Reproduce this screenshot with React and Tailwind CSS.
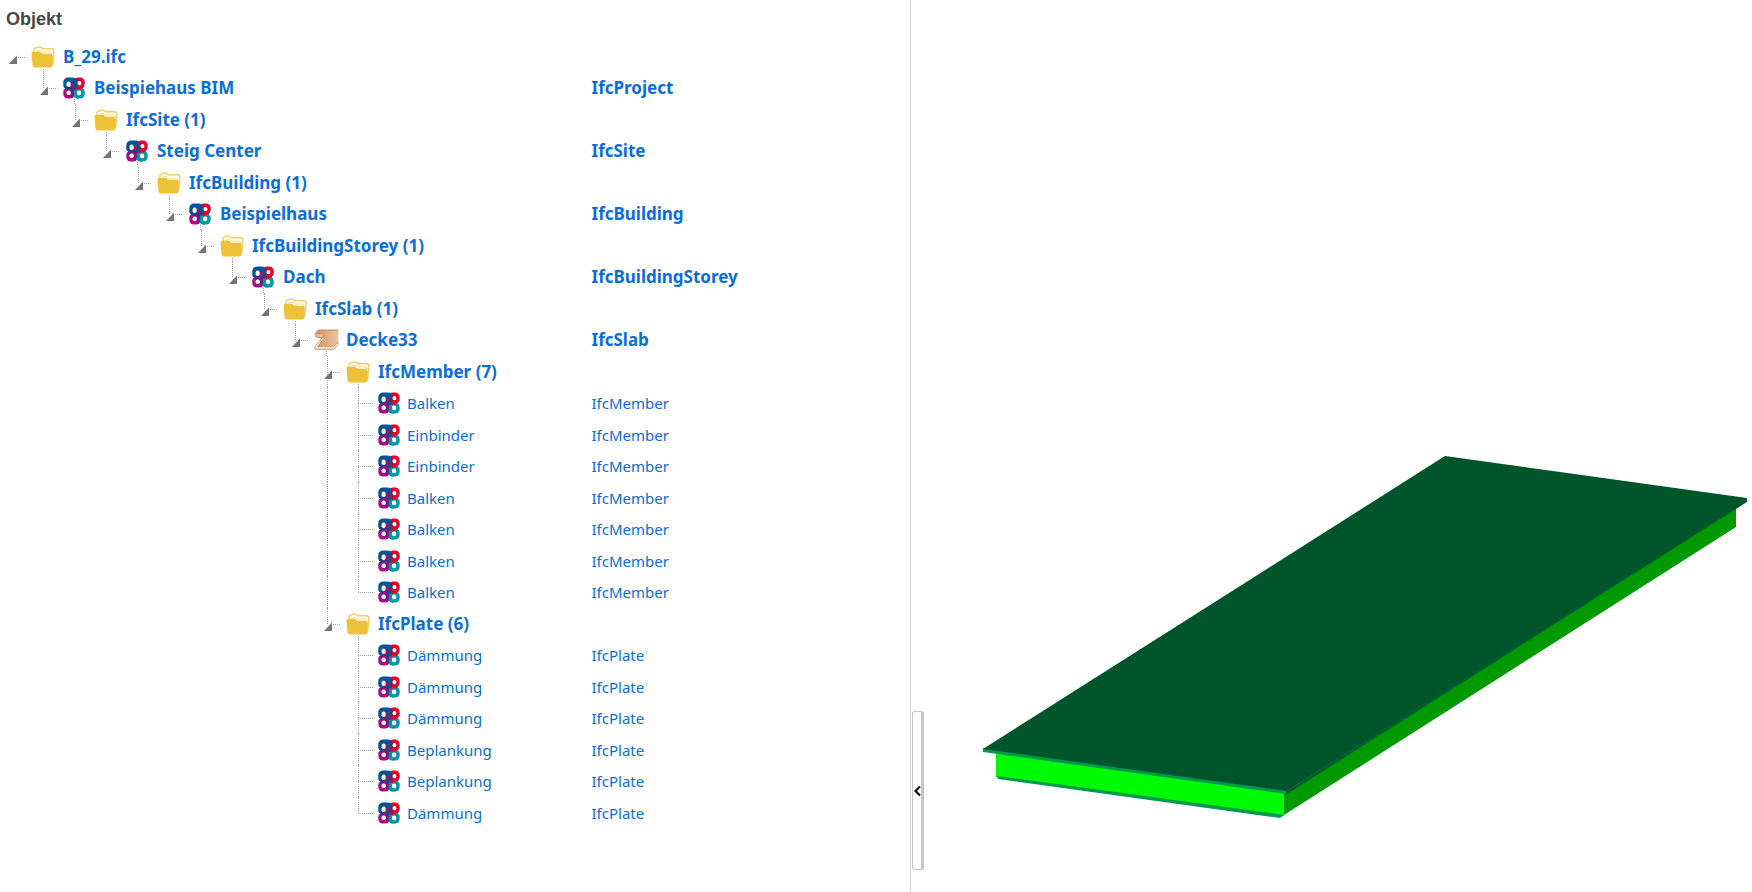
import { useState } from "react";

const ROWS = [
  { depth: 0, icon: "folder", name: "B_29.ifc" },
  { depth: 1, icon: "ifc", name: "Beispiehaus BIM", type: "IfcProject" },
  { depth: 2, icon: "folder", name: "IfcSite (1)" },
  { depth: 3, icon: "ifc", name: "Steig Center", type: "IfcSite" },
  { depth: 4, icon: "folder", name: "IfcBuilding (1)" },
  { depth: 5, icon: "ifc", name: "Beispielhaus", type: "IfcBuilding" },
  { depth: 6, icon: "folder", name: "IfcBuildingStorey (1)" },
  { depth: 7, icon: "ifc", name: "Dach", type: "IfcBuildingStorey" },
  { depth: 8, icon: "folder", name: "IfcSlab (1)" },
  { depth: 9, icon: "beam", name: "Decke33", type: "IfcSlab" },
  { depth: 10, icon: "folder", name: "IfcMember (7)" },
  ...["Balken", "Einbinder", "Einbinder", "Balken", "Balken", "Balken", "Balken"].map((name) => ({
    depth: 11, icon: "ifc", name, type: "IfcMember", leaf: true,
  })),
  { depth: 10, icon: "folder", name: "IfcPlate (6)" },
  ...["Dämmung", "Dämmung", "Dämmung", "Beplankung", "Beplankung", "Dämmung"].map((name) => ({
    depth: 11, icon: "ifc", name, type: "IfcPlate", leaf: true,
  })),
];

// True when a later row continues the branch at the given depth.
function branchContinues(index, depth) {
  for (let i = index + 1; i < ROWS.length; i++) {
    if (ROWS[i].depth < depth) return false;
    if (ROWS[i].depth === depth) return true;
  }
  return false;
}

function FolderIcon() {
  return (
    <svg viewBox="0 0 24 22" className="h-[22px] w-6" aria-hidden="true">
      <path d="M3 7V3.6Q3 2.2 4.6 2L7 1.2Q9 .6 10.2 1.8L11.4 2.8H20.5Q23.2 2.8 23 5.5L21.8 18" fill="#fffdf4" stroke="#efcf6a" strokeWidth="1.4" />
      <path d="M6 6Q6 4.6 8 4.4Q9.6 4.2 10.6 5.2Q11.4 6 13 6H18.8Q20.8 6 20.8 8" fill="none" stroke="#f3dc92" strokeWidth="1" />
      <path d="M.6 8.2Q.4 5.8 2.8 5.8H8Q9.6 5.8 10.4 6.9Q11 7.7 12.2 7.7H19.4Q21.8 7.7 21.8 10V18.6Q21.8 21.4 19.4 21.4H3.6Q1.7 21.4 1.5 19Z" fill="#edc239" />
    </svg>
  );
}

function IfcIcon() {
  return (
    <svg viewBox="0 0 22 22" className="h-[22px] w-[22px]" aria-hidden="true">
      <rect x="10.5" y=".5" width="11.2" height="11.2" rx="4.6" fill="#e4002b" />
      <rect x=".3" y="10.2" width="11.4" height="11.4" rx="4.6" fill="#ae0a86" />
      <rect x="10" y="10.4" width="11.7" height="11.2" rx="4.6" fill="#0097a7" />
      <rect x=".3" y=".4" width="13.6" height="13" rx="5" fill="#00529b" />
      <path d="M4 10.6H9.6Q11.6 12.4 11 16.4Q10.6 19.4 9 20.6L6.6 14.4H4Z" fill="#7d1583" />
      <path d="M12.6 13.2Q10.8 15 11.6 18.6Q12 20.6 13.6 21.4H16V13Z" fill="#0097a7" />
      <path d="M13.4 8.6H19.6V11.4Q17 13 12 12.8Z" fill="#e4002b" />
      <path d="M8.2 5.6Q11.2 6 11 8.6Q10.8 10.6 8.4 10.8Z" fill="#c80b3d" />
      <path d="M11 .6Q15 3 14.2 8Q13.6 12.6 9.6 13.4L9 10.6Q11.8 9.6 11.4 6.6Q11 4 8.6 3.4Z" fill="#00529b" />
      <rect x="3.6" y="4.6" width="4" height="5.4" rx="1.8" fill="#fff" />
      <rect x="14.6" y="4" width="3.8" height="4.2" rx="1.7" fill="#fff" />
      <rect x="3.6" y="13.4" width="4.2" height="4.6" rx="1.8" fill="#fff" />
      <rect x="14" y="13.6" width="4.2" height="4.6" rx="1.8" fill="#fff" />
      <path d="M22 9.6Q21.2 11 19.4 11.4Q21 11.8 22 13Z" fill="#fff" />
      <path d="M0 9.6Q.8 11.2 2.4 11.6Q.8 12 0 13.4Z" fill="#fff" />
    </svg>
  );
}

function BeamIcon() {
  return (
    <svg viewBox="0 0 25 22" className="h-[22px] w-[25px]" aria-hidden="true">
      <defs>
        <linearGradient id="wood" x1="0" x2="1">
          <stop offset="0" stopColor="#d29560" />
          <stop offset="1" stopColor="#e9c6a2" />
        </linearGradient>
      </defs>
      <path d="M1 5L4.5 1H24.5L24 15.5L20 20.5H1.5L1 17.5L8 9.5L1.5 8Z" fill="url(#wood)" />
      <path d="M1.5 4.6L4.5 1.2H24.2" stroke="#d0905a" strokeWidth="1.2" fill="none" />
      <path d="M1 4.8H9.6L9.8 7.4L7.4 8.6L3.6 8.2L1.2 7.2Z" fill="#e9bf97" stroke="#c27f48" strokeWidth=".7" />
      <path d="M8.6 8.4L1 17V20.2H20L24 15.6V13L19.6 17.6H3.6L9.8 9.6Z" fill="#fbf0e3" stroke="#c58450" strokeWidth=".8" />
    </svg>
  );
}

const ICONS = { folder: FolderIcon, ifc: IfcIcon, beam: BeamIcon };

function Branch({ row, index, expanded, onToggle }) {
  const Icon = ICONS[row.icon];
  const height = index % 2 ? "h-8" : "h-[31px]";
  const continues = row.depth > 0 && branchContinues(index, row.depth);
  return (
    <div className={`flex ${height}`}>
      {Array.from({ length: row.depth }, (_, d) => (
        <span key={d} className={`shrink-0 pl-3 ${d % 2 ? "w-8" : "w-[31px]"}`}>
          {d > 0 && branchContinues(index, d) && (
            <span className="block h-full w-px border-l border-dotted border-[#a8a8a8]" />
          )}
        </span>
      ))}
      <span className="grid w-[31px] shrink-0">
        <span className="col-start-1 row-start-1 flex flex-col pl-3">
          {row.depth > 0 && (
            <span className={`w-px border-l border-dotted border-[#a8a8a8] ${continues ? "h-full" : "h-4"}`} />
          )}
        </span>
        <span className={`col-start-1 row-start-1 pt-4 pl-3 ${row.leaf ? "pr-1" : "pr-1.5"}`}>
          <span className={`block border-t border-dotted border-[#a8a8a8] ${row.leaf ? "" : "ml-1"}`} />
        </span>
        {!row.leaf && (
          <button
            type="button"
            aria-label={`${expanded ? "Collapse" : "Expand"} ${row.name}`}
            aria-expanded={expanded}
            onClick={onToggle}
            className="col-start-1 row-start-1 mt-3.5 ml-2 h-2.5 w-2.5 self-start"
          >
            <svg viewBox="0 0 10 10" className="h-2.5 w-2.5" aria-hidden="true">
              <path d="M1 9L9 .5V9Z" fill="#757575" />
            </svg>
          </button>
        )}
      </span>
      <span className="grid w-6 shrink-0 grid-cols-1 grid-rows-1">
        {!row.leaf && expanded && (
          <span className="col-start-1 row-start-1 ml-3 h-3 w-px self-end border-l border-dotted border-[#a8a8a8]" />
        )}
        <span className="z-10 col-start-1 row-start-1 flex h-[22px] w-6 justify-center self-center">
          <span className="bg-white">
            <Icon />
          </span>
        </span>
      </span>
      <span className={`self-center whitespace-nowrap ${row.leaf ? "pl-1.5" : "pl-2 text-[17px] font-bold"}`}>
        {row.name}
      </span>
    </div>
  );
}

function ObjectTree() {
  const [collapsed, setCollapsed] = useState({});
  const visible = [];
  let hiddenBelow = Infinity;
  ROWS.forEach((row, index) => {
    if (row.depth > hiddenBelow) return;
    hiddenBelow = collapsed[index] ? row.depth : Infinity;
    visible.push({ row, index });
  });
  return (
    <table className="w-full table-fixed border-collapse text-left text-[15px] leading-5 text-[#0a6ed8]">
      <thead>
        <tr className="h-[41px] align-top text-lg leading-5 text-[#474747]">
          <th className="w-[65%] px-1.5 pt-[9px] font-[Liberation_Sans,sans-serif] font-bold">Objekt</th>
          <th aria-label="Type" />
        </tr>
      </thead>
      <tbody>
        {visible.map(({ row, index }) => (
          <tr key={index}>
            <td className="p-0">
              <Branch
                row={row}
                index={index}
                expanded={!collapsed[index]}
                onToggle={() => setCollapsed((c) => ({ ...c, [index]: !c[index] }))}
              />
            </td>
            <td className={`p-0 align-middle ${row.leaf ? "" : "text-[17px] font-bold"}`}>{row.type}</td>
          </tr>
        ))}
      </tbody>
    </table>
  );
}

function SlabModel() {
  return (
    <svg
      viewBox="924 0 828 892"
      preserveAspectRatio="xMidYMid meet"
      className="h-screen min-w-0 flex-1"
      role="img"
      aria-label="Decke33"
    >
      <path d="M1284 794L1736 508V527L1284 815Z" fill="#009900" />
      <path d="M996 753L1284 792V816L996 777Z" fill="#00fa00" />
      <path d="M997 776L1284 815L1280 818L998 779Z" fill="#00994d" />
      <path d="M1285 792L1747 499V502L1287 794Z" fill="#005e30" />
      <path d="M983 748L1286 790V794L983 752Z" fill="#00994d" />
      <path d="M1445 456L1747 498V501L1287 791L983 749Z" fill="#00562a" />
    </svg>
  );
}

export default function App() {
  return (
    <div className="flex min-h-screen overflow-hidden bg-white font-[Noto_Sans,sans-serif]">
      <main className="w-[52%] shrink-0 border-r border-[#d4d4d4]">
        <ObjectTree />
      </main>
      <button
        type="button"
        aria-label="Collapse panel"
        className="mb-[22px] ml-px flex h-[159px] w-3 shrink-0 items-center justify-center self-end rounded-[3px] border border-r-[3px] border-[#c6c6c6] bg-white"
      >
        <svg viewBox="0 0 8 12" className="h-3 w-2 shrink-0" fill="none" stroke="#111" strokeWidth="2.2" aria-hidden="true">
          <path d="M7 1.5L2.5 6L7 10.5" />
        </svg>
      </button>
      <SlabModel />
    </div>
  );
}
